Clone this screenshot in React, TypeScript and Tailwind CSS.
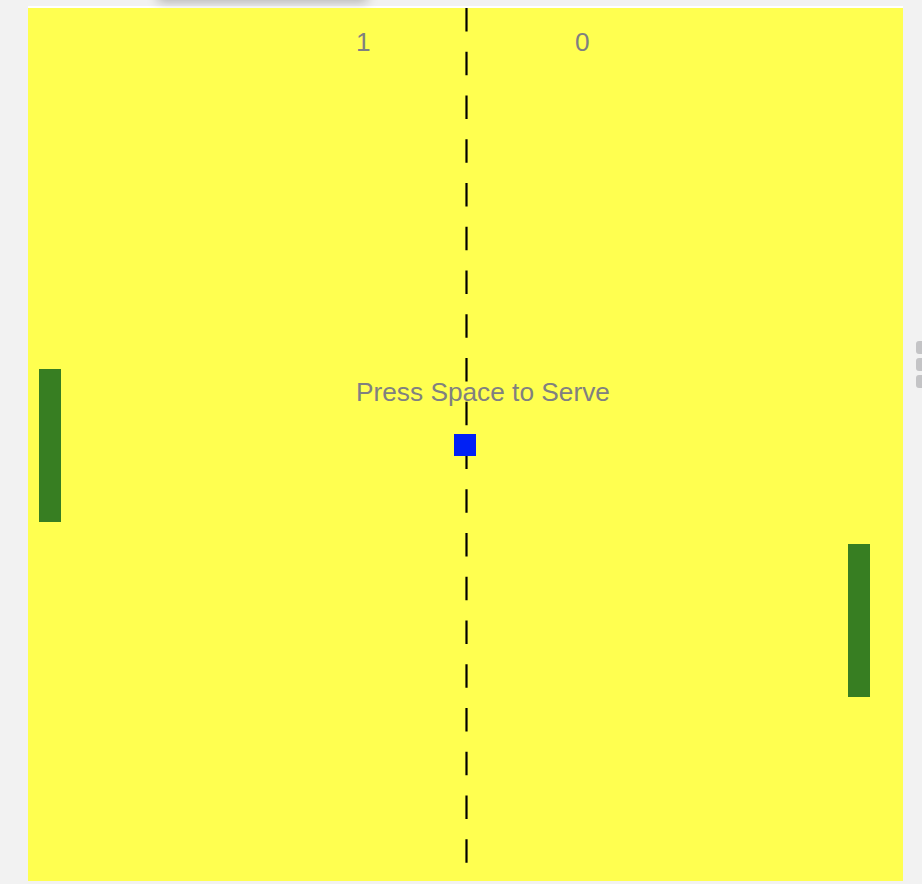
const dashes = Array.from({ length: 20 }, (_, i) => i);

export default function App() {
  return (
    <div className="relative h-[884px] w-[922px] overflow-hidden bg-[#f2f2f2]" style={{ fontFamily: '"Liberation Sans", Arial, sans-serif' }}>
      <div className="absolute left-[158px] top-[-20px] h-[20px] w-[209px] shadow-[0_2px_12px_rgba(0,0,0,0.28)]" />
      <div className="absolute right-0 top-[341px] flex w-[6px] flex-col gap-[4px]">
        <div className="h-[13px] rounded-l-[3px] bg-[#c4c4c6]" />
        <div className="h-[13px] rounded-l-[3px] bg-[#c4c4c6]" />
        <div className="h-[13px] rounded-l-[3px] bg-[#c4c4c6]" />
      </div>
      <div className="ml-[28px] mt-[6px] w-[875px] bg-white pt-[2px]">
        <div className="relative h-[873px] w-[875px] bg-[#ffff50]">
          <svg className="absolute left-[437px] top-0" width="3" height="873" viewBox="0 0 3 873">
            {dashes.map((i) => (
              <line key={i} x1="1.5" x2="1.5" y1={i * 43.75} y2={i * 43.75 + 23.5} stroke="#000" strokeWidth="2.2" />
            ))}
          </svg>
          <div className="absolute left-[328px] top-[20px] text-[26.25px] leading-[29px] text-[#808080]">1</div>
          <div className="absolute left-[547px] top-[20px] text-[26.25px] leading-[29px] text-[#808080]">0</div>
          <div className="absolute left-[328px] top-[370px] whitespace-nowrap text-[26.25px] leading-[29px] text-[#808080]">Press Space to Serve</div>
          <div className="absolute left-[11px] top-[361px] h-[153px] w-[22px] bg-[#377e22]" />
          <div className="absolute left-[820px] top-[536px] h-[153px] w-[22px] bg-[#377e22]" />
          <div className="absolute left-[426px] top-[426px] h-[22px] w-[22px] bg-[#0020f5]" />
        </div>
      </div>
    </div>
  );
}
